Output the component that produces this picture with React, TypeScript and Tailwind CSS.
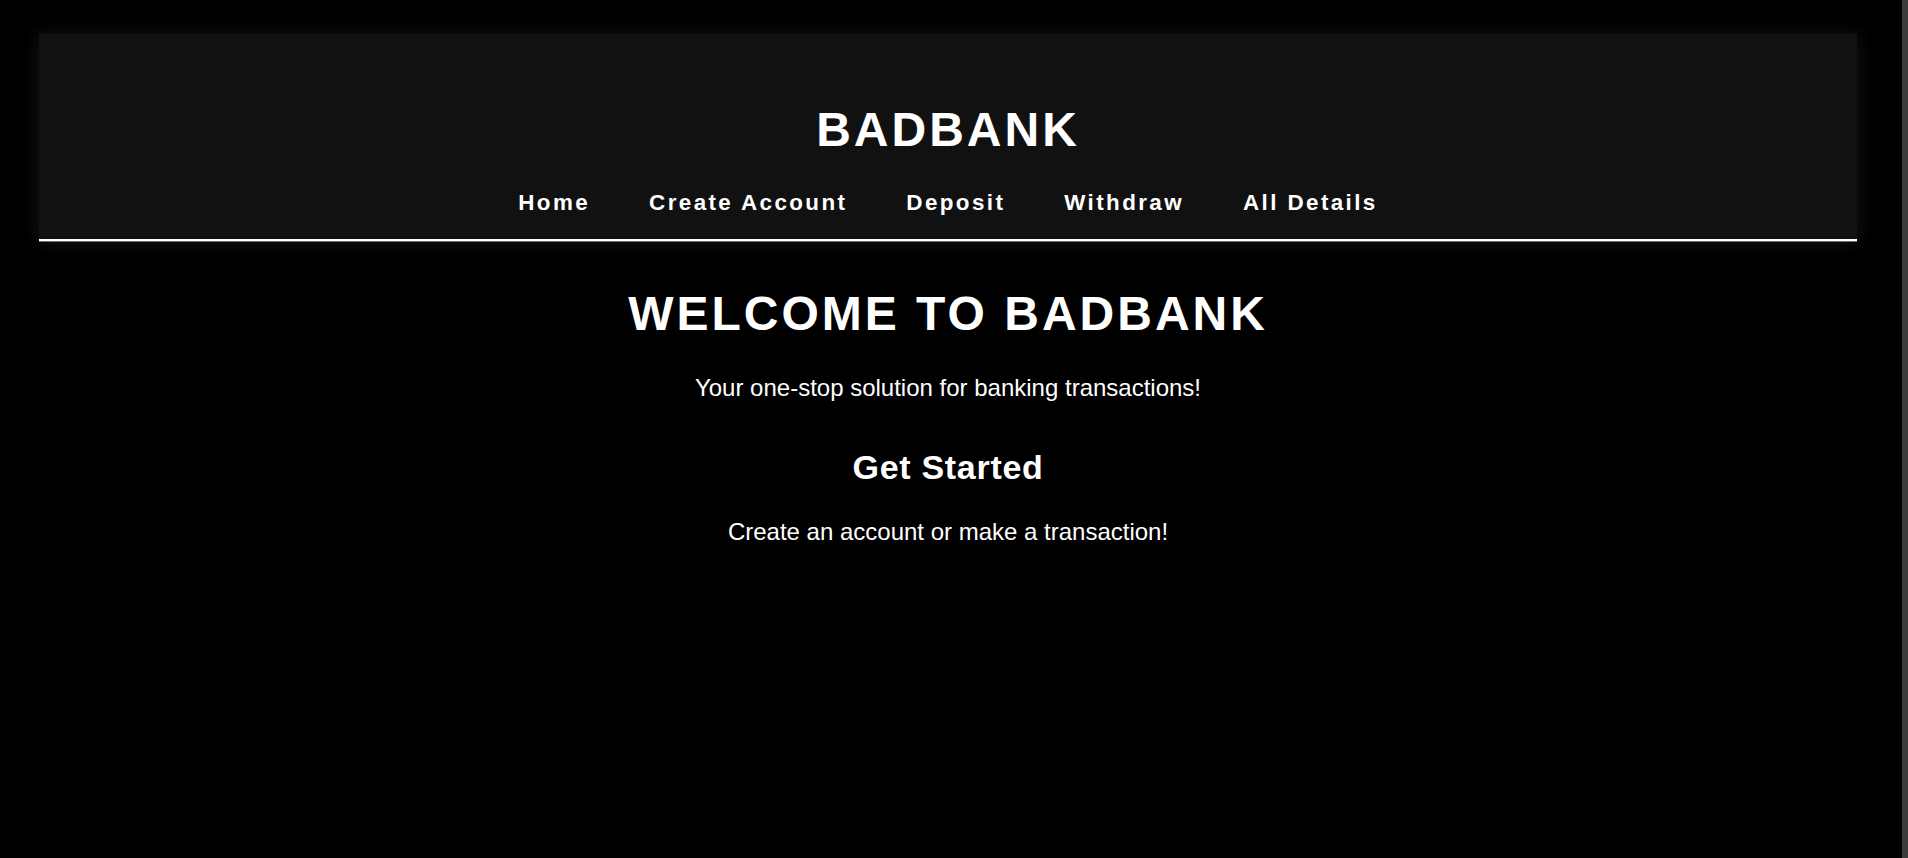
const links = ["Home", "Create Account", "Deposit", "Withdraw", "All Details"];

function NavBar() {
  return (
    <header className="bg-[#111111] border-b-2 border-white shadow-[0_1px_0_#6f6f6f,0_0_16px_rgba(255,255,255,0.09)] h-[207px] flex flex-col items-center pt-[72px]">
      <h1 className="text-[48px] leading-[48px] font-bold tracking-[3px] text-white">BADBANK</h1>
      <nav className="mt-[38px] flex gap-[59px]">
        {links.map((l) => (
          <a key={l} href="#" className="text-[22.4px] leading-[22px] font-bold tracking-[2.4px] text-white">
            {l}
          </a>
        ))}
      </nav>
    </header>
  );
}

function Home() {
  return (
    <main className="flex flex-col items-center text-white">
      <h1 className="mt-[49px] text-[48px] leading-[48px] font-bold tracking-[3px]">WELCOME TO BADBANK</h1>
      <p className="mt-[38px] text-[24px] leading-[24px]">Your one-stop solution for banking transactions!</p>
      <h2 className="mt-[50px] text-[34px] leading-[34px] font-bold tracking-[0.7px]">Get Started</h2>
      <p className="mt-[36px] text-[24px] leading-[24px]">Create an account or make a transaction!</p>
    </main>
  );
}

export default function App() {
  return (
    <div className="flex min-h-screen bg-black font-['Liberation_Sans',Arial,sans-serif]">
      <div className="flex-1">
        <div className="ml-[39px] w-[1818px] pt-[34px]">
          <NavBar />
          <Home />
        </div>
      </div>
      <div className="w-[6px] bg-[#3c3c3c]" />
    </div>
  );
}
